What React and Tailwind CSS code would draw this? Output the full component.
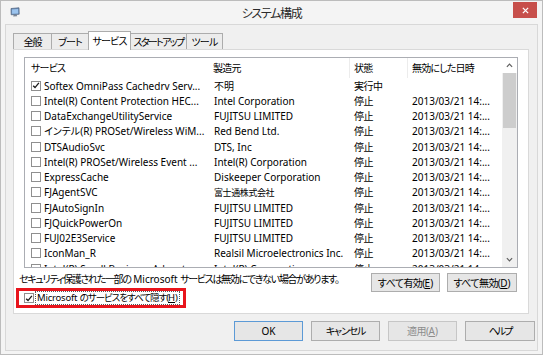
import React from 'react';

const rows = [
  { on: true, name: 'Softex OmniPass Cachedrv Serv...', maker: '不明', state: '実行中', date: '' },
  { name: 'Intel(R) Content Protection HEC...', maker: 'Intel Corporation', state: '停止', date: '2013/03/21 14:...' },
  { name: 'DataExchangeUtilityService', maker: 'FUJITSU LIMITED', state: '停止', date: '2013/03/21 14:...' },
  { name: 'インテル(R) PROSet/Wireless WiM...', maker: 'Red Bend Ltd.', state: '停止', date: '2013/03/21 14:...' },
  { name: 'DTSAudioSvc', maker: 'DTS, Inc', state: '停止', date: '2013/03/21 14:...' },
  { name: 'Intel(R) PROSet/Wireless Event ...', maker: 'Intel(R) Corporation', state: '停止', date: '2013/03/21 14:...' },
  { name: 'ExpressCache', maker: 'Diskeeper Corporation', state: '停止', date: '2013/03/21 14:...' },
  { name: 'FJAgentSVC', maker: '富士通株式会社', state: '停止', date: '2013/03/21 14:...', jpMaker: true },
  { name: 'FJAutoSignIn', maker: 'FUJITSU LIMITED', state: '停止', date: '2013/03/21 14:...' },
  { name: 'FJQuickPowerOn', maker: 'FUJITSU LIMITED', state: '停止', date: '2013/03/21 14:...' },
  { name: 'FUJ02E3Service', maker: 'FUJITSU LIMITED', state: '停止', date: '2013/03/21 14:...' },
  { name: 'IconMan_R', maker: 'Realsil Microelectronics Inc.', state: '停止', date: '2013/03/21 14:...' },
  { name: 'Intel(R) Small Business Advanta...', maker: 'Intel(R) Corporation', state: '停止', date: '2013/03/21 14:...' },
];

function Check({ checked }) {
  return (
    <span className="w-[10px] h-[10px] border border-[#8f8f8f] bg-white flex items-center justify-center shrink-0">
      {checked && (
        <svg viewBox="0 0 10 10" className="w-[9px] h-[9px]">
          <path d="M1.5 5.2 L3.8 7.6 L8.6 1.8" stroke="#1a1a1a" strokeWidth="1.7" fill="none" />
        </svg>
      )}
    </span>
  );
}

function Btn({ children, className = '', primary, disabled }) {
  return (
    <div
      className={`flex items-center justify-center border bg-[#e6e6e6] whitespace-nowrap ${
        primary ? 'border-[#5c9ad6]' : disabled ? 'border-[#c6c6c6]' : 'border-[#adadad]'
      } ${disabled ? 'text-[#8c8c8c]' : 'text-black'} ${className}`}
    >
      {children}
    </div>
  );
}

function Tab({ label, active, w, t = 'tracking-[-0.8px]' }) {
  if (active) {
    return (
      <div className={`${w} h-[19px] -ml-px bg-white border border-b-0 border-[#acacac] flex items-center justify-center`}>
        <span className={t}>{label}</span>
      </div>
    );
  }
  return (
    <div className={`${w} h-[16px] mb-[1px] -ml-px first:ml-0 bg-[#ececec] border border-b-0 border-[#acacac] flex items-center justify-center`}>
      <span className={t}>{label}</span>
    </div>
  );
}

export default function App() {
  return (
    <div className="w-[543px] h-[355px] overflow-hidden bg-[#f4f4f4] border border-[#bcbcbc] flex flex-col font-['Noto_Sans','Noto_Sans_CJK_JP',sans-serif] text-[10px] leading-none text-black [font-feature-settings:'palt']">
      {/* title bar */}
      <div className="h-[23px] grid grid-cols-[1fr_auto_1fr] items-start shrink-0">
        <div className="pl-[9px] pt-[6px]">
          <svg viewBox="0 0 10 10" className="w-[10px] h-[10px]">
            <path d="M1 1.5 L9 0.8 L9.2 7.2 L1.2 7.8 Z" fill="#6d8fb8" stroke="#4a5f7c" strokeWidth="0.7" />
            <path d="M2 2.4 L8.1 1.9 L8.2 6.4 L2.1 6.8 Z" fill="#9cc4ee" />
            <path d="M3.5 8 L6.8 7.8 L7.2 9.3 L3.2 9.5 Z" fill="#7c8796" />
          </svg>
        </div>
        <div className="pt-[7px] text-[12px] text-[#2b2b2b] tracking-[-1.3px]">システム構成</div>
        <div className="flex justify-end pr-[5px] pt-px">
          <div className="w-[24px] h-[16px] bg-[#c74f4b] flex items-center justify-center">
            <svg viewBox="0 0 8 8" className="w-[7px] h-[7px]">
              <path d="M1 1 L7 7 M7 1 L1 7" stroke="white" strokeWidth="1.5" />
            </svg>
          </div>
        </div>
      </div>

      {/* client area */}
      <div className="flex-1 mx-[4px] mb-[3px] bg-[#f0f0f0] border border-[#d8d8d8] flex flex-col">
        <div className="flex items-end ml-[7px] mt-[6px] h-[19px] relative z-10">
          <Tab label="全般" w="w-[39px]" t="tracking-[-1px]" />
          <Tab label="ブート" w="w-[38px]" />
          <Tab label="サービス" w="w-[43px]" active />
          <Tab label="スタートアップ" w="w-[57px]" t="tracking-[-1.7px]" />
          <Tab label="ツール" w="w-[37px]" />
        </div>

        <div className="ml-[7px] -mt-px w-[516px] h-[265px] bg-white border border-[#d9d9d9] flex flex-col">
          {/* list */}
          <div className="ml-[10px] mt-[7px] w-[494px] h-[211px] border border-[#abadb3] flex overflow-hidden">
            <div className="flex-1 flex flex-col overflow-hidden">
              <div className="h-[20px] shrink-0 flex items-center tracking-[-0.8px]">
                <div className="w-[183px] pl-[6px]">サービス</div>
                <div className="w-[141px] pl-[5px] h-full flex items-center">製造元</div>
                <div className="w-[58px] pl-[4px] h-full flex items-center border-l border-[#ececec]">状態</div>
                <div className="flex-1 pl-[4px] h-full flex items-center border-l border-[#ececec]">無効にした日時</div>
              </div>
              {rows.map((r) => (
                <div key={r.name} className="h-[15.25px] shrink-0 flex items-center">
                  <div className="w-[183px] pl-[6px] flex items-center gap-[3px] whitespace-nowrap">
                    <Check checked={r.on} />
                    <span>{r.name}</span>
                  </div>
                  <div className={`w-[141px] pl-[6px] whitespace-nowrap ${r.jpMaker ? 'text-[9px] tracking-[-0.4px]' : ''}`}>{r.maker}</div>
                  <div className="w-[58px] pl-[5px] tracking-[-0.5px]">{r.state}</div>
                  <div className="flex-1 pl-[5px] whitespace-nowrap">{r.date}</div>
                </div>
              ))}
            </div>
            {/* scrollbar */}
            <div className="w-[15px] shrink-0 bg-[#f0f0f0] flex flex-col">
              <div className="h-[15px] bg-white flex items-center justify-center">
                <svg viewBox="0 0 8 5" className="w-[7px] h-[5px]">
                  <path d="M1 4 L4 1 L7 4" stroke="#606060" strokeWidth="1.4" fill="none" />
                </svg>
              </div>
              <div className="h-[55px] mx-px bg-[#cdcdcd]" />
              <div className="flex-1" />
              <div className="h-[15px] flex items-center justify-center">
                <svg viewBox="0 0 8 5" className="w-[7px] h-[5px]">
                  <path d="M1 1 L4 4 L7 1" stroke="#606060" strokeWidth="1.4" fill="none" />
                </svg>
              </div>
            </div>
          </div>

          {/* bottom of panel */}
          <div className="flex items-start">
            <div className="flex-1 flex flex-col pl-[2px]">
              <div className="mt-[4px] pl-[3px] h-[13px] flex items-center whitespace-nowrap">
                <span className="tracking-[-1.3px]">セキュリティ保護された一部の</span>
                <span>&nbsp;Microsoft&nbsp;</span>
                <span className="tracking-[-1.3px]">サービスは無効にできない場合があります。</span>
              </div>
              <div className="mt-[3px] w-[170px] h-[20px] border-[3px] border-[#e8141c] flex items-center pl-[5px] gap-[1px] overflow-hidden">
                <Check checked />
                <span className="border border-dotted border-[#555] px-px h-[14px] flex items-center whitespace-nowrap text-[9.5px]">
                  <span className="tracking-[-0.2px]">Microsoft&nbsp;</span>
                  <span className="tracking-[-1px]">のサービスをすべて隠す(</span>
                  <span className="underline">H</span>)
                </span>
              </div>
            </div>
            <div className="flex gap-[7px] mt-[5px] mr-[11px]">
              <Btn className="w-[69px] h-[19px]">
                <span className="tracking-[-0.6px]">すべて有効(</span><span className="underline">E</span>)
              </Btn>
              <Btn className="w-[70px] h-[19px]">
                <span className="tracking-[-0.6px]">すべて無効(</span><span className="underline">D</span>)
              </Btn>
            </div>
          </div>
        </div>

        <div className="flex justify-end gap-[8px] mt-[7px] mr-[2px]">
          <Btn primary className="w-[69px] h-[20px]">OK</Btn>
          <Btn className="w-[69px] h-[20px]"><span className="tracking-[-1.2px]">キャンセル</span></Btn>
          <Btn disabled className="w-[69px] h-[20px]">
            <span className="tracking-[-0.5px]">適用(</span><span className="underline">A</span>)
          </Btn>
          <Btn className="w-[70px] h-[20px]"><span className="tracking-[-2px]">ヘルプ</span></Btn>
        </div>
      </div>
    </div>
  );
}
